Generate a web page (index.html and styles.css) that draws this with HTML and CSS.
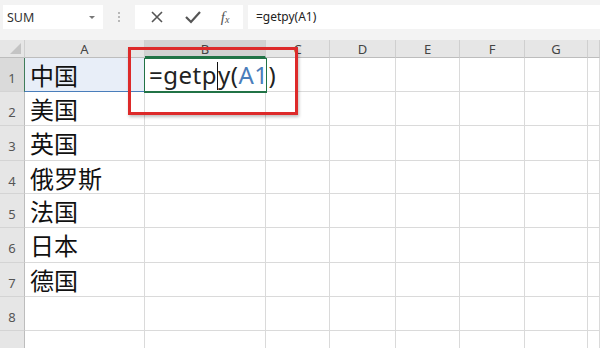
FILE: index.html
```html
<!DOCTYPE html>
<html>
<head>
    <title>getpy</title>
    <link rel="stylesheet" href="styles.css">
</head>
<body>
    <div class="app">
        <div class="toolbar">
            <div class="name-box">
                <span>SUM</span>
                <span class="caret"></span>
            </div>
            <div class="grip"><i></i><i></i><i></i></div>
            <div class="icon-box">
                <svg width="16" height="16" viewBox="0 0 16 16"><path d="M3 3 L13 13 M13 3 L3 13" stroke="#555" stroke-width="1.6" fill="none"/></svg>
                <svg width="18" height="16" viewBox="0 0 18 16"><path d="M2 8 L7 13 L16 3" stroke="#555" stroke-width="2.2" fill="none"/></svg>
                <span class="fx">f<sub>x</sub></span>
            </div>
            <div class="formula-box">=getpy(A1)</div>
        </div>

        <div class="sheet">
            <div class="corner"></div>
            <div class="col-head">A</div>
            <div class="col-head active">B</div>
            <div class="col-head">C</div>
            <div class="col-head">D</div>
            <div class="col-head">E</div>
            <div class="col-head">F</div>
            <div class="col-head">G</div>
            <div class="col-head"></div>

            <div class="row-head active">1</div>
            <div class="cell ref">中国</div>
            <div class="cell editing">=getp<span class="caret-line"></span>y(<span class="blue">A1</span>)</div>
            <div class="cell"></div><div class="cell"></div><div class="cell"></div><div class="cell"></div><div class="cell"></div><div class="cell"></div>

            <div class="row-head">2</div>
            <div class="cell">美国</div>
            <div class="cell"></div><div class="cell"></div><div class="cell"></div><div class="cell"></div><div class="cell"></div><div class="cell"></div><div class="cell"></div>

            <div class="row-head">3</div>
            <div class="cell">英国</div>
            <div class="cell"></div><div class="cell"></div><div class="cell"></div><div class="cell"></div><div class="cell"></div><div class="cell"></div><div class="cell"></div>

            <div class="row-head">4</div>
            <div class="cell">俄罗斯</div>
            <div class="cell"></div><div class="cell"></div><div class="cell"></div><div class="cell"></div><div class="cell"></div><div class="cell"></div><div class="cell"></div>

            <div class="row-head">5</div>
            <div class="cell">法国</div>
            <div class="cell"></div><div class="cell"></div><div class="cell"></div><div class="cell"></div><div class="cell"></div><div class="cell"></div><div class="cell"></div>

            <div class="row-head">6</div>
            <div class="cell">日本</div>
            <div class="cell"></div><div class="cell"></div><div class="cell"></div><div class="cell"></div><div class="cell"></div><div class="cell"></div><div class="cell"></div>

            <div class="row-head">7</div>
            <div class="cell">德国</div>
            <div class="cell"></div><div class="cell"></div><div class="cell"></div><div class="cell"></div><div class="cell"></div><div class="cell"></div><div class="cell"></div>

            <div class="row-head">8</div>
            <div class="cell"></div><div class="cell"></div><div class="cell"></div><div class="cell"></div><div class="cell"></div><div class="cell"></div><div class="cell"></div><div class="cell"></div>

            <div class="row-head last"></div>
            <div class="cell"></div><div class="cell"></div><div class="cell"></div><div class="cell"></div><div class="cell"></div><div class="cell"></div><div class="cell"></div><div class="cell"></div>

            <div class="highlight"></div>
        </div>
    </div>
</body>
</html>
```

FILE: styles.css
```css
body {
    margin: 0;
    background: #ffffff;
    font-family: "Noto Sans", "Noto Sans CJK SC", sans-serif;
    overflow: hidden;
}

.app {
    width: 600px;
    height: 348px;
    overflow: hidden;
    background: #f3f3f3;
}

.toolbar {
    display: flex;
    align-items: center;
    height: 24px;
    padding: 5px 0 11px 3px;
}

.name-box {
    width: 100px;
    height: 24px;
    background: #fff;
    display: flex;
    align-items: center;
    justify-content: space-between;
    padding: 0 4px 0 4px;
    box-sizing: border-box;
    font-size: 12.5px;
    color: #333;
}

.caret {
    width: 0;
    height: 0;
    border-left: 3px solid transparent;
    border-right: 3px solid transparent;
    border-top: 3px solid #777;
    margin-right: 4px;
}

.grip {
    width: 32px;
    display: flex;
    flex-direction: column;
    align-items: center;
    gap: 2px;
}

.grip i {
    width: 2px;
    height: 2px;
    background: #b8b8b8;
}

.icon-box {
    width: 108px;
    height: 24px;
    background: #fff;
    display: flex;
    align-items: center;
    justify-content: space-around;
    padding: 0 4px;
    box-sizing: border-box;
}

.fx {
    font-family: "Liberation Serif", serif;
    font-style: italic;
    font-size: 15px;
    color: #555;
    line-height: 1;
}

.fx sub {
    font-size: 10px;
    vertical-align: -1px;
}

.formula-box {
    flex: 1;
    height: 24px;
    margin-left: 5px;
    background: #fff;
    font-size: 12px;
    line-height: 24px;
    padding-left: 8px;
    color: #222;
}

.sheet {
    position: relative;
    display: grid;
    grid-template-columns: 25px 120px 121px 64px 66px 64px 65px 63px 1fr;
    grid-template-rows: 18px 34px 34px 35px 33px 34px 35px 34px 34px 34px;
    background: #fff;
}

.corner {
    background: #e6e6e6;
    border-right: 1px solid #cfcfcf;
    border-bottom: 1px solid #bdbdbd;
    position: relative;
}

.corner::after {
    content: "";
    position: absolute;
    right: 3px;
    bottom: 3px;
    border-left: 11px solid transparent;
    border-bottom: 11px solid #c4c4c4;
}

.col-head {
    background: #e6e6e6;
    border-right: 1px solid #cfcfcf;
    border-bottom: 1px solid #bdbdbd;
    font-size: 13px;
    color: #444;
    text-align: center;
    line-height: 18px;
}

.col-head.active {
    background: #d2d2d2;
    border-bottom: 2px solid #217346;
}

.row-head {
    background: #e6e6e6;
    border-right: 1px solid #bdbdbd;
    border-bottom: 1px solid #d4d4d4;
    font-size: 13px;
    color: #555;
    text-align: center;
    line-height: 40px;
}

.row-head.active {
    background: #dadada;
}

.cell {
    border-right: 1px solid #dadada;
    border-bottom: 1px solid #dadada;
    font-family: "Noto Sans CJK SC", sans-serif;
    font-size: 24px;
    line-height: 34px;
    color: #111;
    padding-left: 5px;
    white-space: nowrap;
}

.cell.ref {
    background: #e8eef8;
    border-left: 1px solid #3f7d5a;
    border-bottom: 1px solid #4a7ebb;
    margin-left: -1px;
}

.cell.editing {
    border: 1px solid #217346;
    border-width: 1px 1px 2px 1px;
    margin: 0 -1px -1px -1px;
    font-family: "Noto Sans", "Noto Sans CJK SC", sans-serif;
    font-size: 24px;
    letter-spacing: 0.5px;
    line-height: 32px;
    padding-left: 4px;
    color: #222;
    overflow: visible;
    z-index: 1;
}

.blue {
    color: #4a7ebb;
}

.caret-line {
    display: inline-block;
    width: 1px;
    height: 28px;
    background: #111;
    vertical-align: -6px;
}

.highlight {
    position: absolute;
    left: 128px;
    top: 7px;
    width: 164px;
    height: 62px;
    border: 3px solid #dd2a2a;
    box-shadow: 1px 2px 3px rgba(0, 0, 0, 0.25);
    z-index: 2;
}
```
